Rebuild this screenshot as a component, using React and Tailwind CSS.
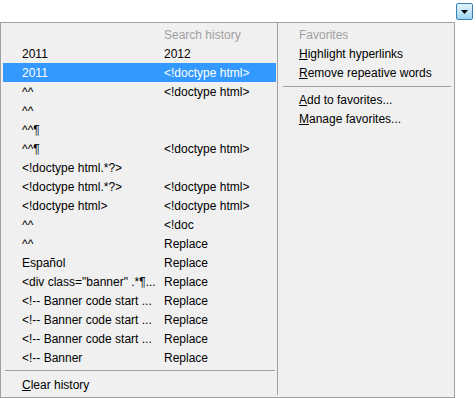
const rows = [
  ["2011", "2012"],
  ["2011", "<!doctype html>", true],
  ["^^", "<!doctype html>"],
  ["^^", ""],
  ["^^¶", ""],
  ["^^¶", "<!doctype html>"],
  ["<!doctype html.*?>", ""],
  ["<!doctype html.*?>", "<!doctype html>"],
  ["<!doctype html>", "<!doctype html>"],
  ["^^", "<!doc"],
  ["^^", "Replace"],
  ["Español", "Replace"],
  ['<div class="banner" .*¶...', "Replace"],
  ["<!-- Banner code start ...", "Replace"],
  ["<!-- Banner code start ...", "Replace"],
  ["<!-- Banner code start ...", "Replace"],
  ["<!-- Banner", "Replace"],
];

function Mnemonic({ first, rest }) {
  return (
    <span>
      <span className="underline underline-offset-1">{first}</span>
      {rest}
    </span>
  );
}

export default function App() {
  return (
    <div
      className="relative h-[398px] w-[476px] bg-white text-[12px] text-black"
      style={{ fontFamily: '"Liberation Sans", Arial, sans-serif' }}
    >
      {/* top strip with dropdown button */}
      <div className="flex h-[22px] justify-end pr-[3px] pt-[3px]">
        <div className="flex h-[17px] w-[17px] items-center justify-center rounded-[2px] border border-[#3c7fb1] bg-gradient-to-b from-[#e3f4fc] to-[#9dd5f3]">
          <svg width="7" height="4" viewBox="0 0 7 4">
            <path d="M0 0h7L3.5 4z" fill="#000" />
          </svg>
        </div>
      </div>

      {/* popup panel */}
      <div className="flex h-[376px] w-[455px] border border-[#a0a0a0] bg-[#f0f0f0]">
        {/* history */}
        <div className="flex w-[276px] flex-col pl-[2px] pr-[1px] pt-[2px]">
          <div className="flex h-[19px] items-center pl-[161px] text-[#a0a0a0]">
            Search history
          </div>
          {rows.map(([a, b, sel], i) => (
            <div
              key={i}
              className={`flex h-[19px] items-center pl-[19px] ${
                sel ? "bg-[#3399ff] text-white" : ""
              }`}
            >
              <span className="w-[142px] whitespace-nowrap">{a}</span>
              <span className="whitespace-nowrap">{b}</span>
            </div>
          ))}
          <div className="ml-[2px] mr-[1px] mt-[3px] h-px bg-[#a0a0a0]" />
          <div className="mt-[4px] flex h-[19px] items-center pl-[19px]">
            <Mnemonic first="C" rest="lear history" />
          </div>
        </div>

        {/* divider */}
        <div className="mb-[2px] w-px bg-[#a0a0a0]" />

        {/* favorites */}
        <div className="flex flex-1 flex-col pt-[2px]">
          <div className="flex h-[19px] items-center pl-[21px] text-[#a0a0a0]">
            Favorites
          </div>
          <div className="flex h-[19px] items-center pl-[21px]">
            <Mnemonic first="H" rest="ighlight hyperlinks" />
          </div>
          <div className="flex h-[19px] items-center pl-[21px]">
            <Mnemonic first="R" rest="emove repeative words" />
          </div>
          <div className="ml-[5px] mr-[3px] mt-[4px] h-px bg-[#a0a0a0]" />
          <div className="mt-[3px] flex h-[19px] items-center pl-[21px]">
            <Mnemonic first="A" rest="dd to favorites..." />
          </div>
          <div className="flex h-[19px] items-center pl-[21px]">
            <Mnemonic first="M" rest="anage favorites..." />
          </div>
        </div>
      </div>
    </div>
  );
}
